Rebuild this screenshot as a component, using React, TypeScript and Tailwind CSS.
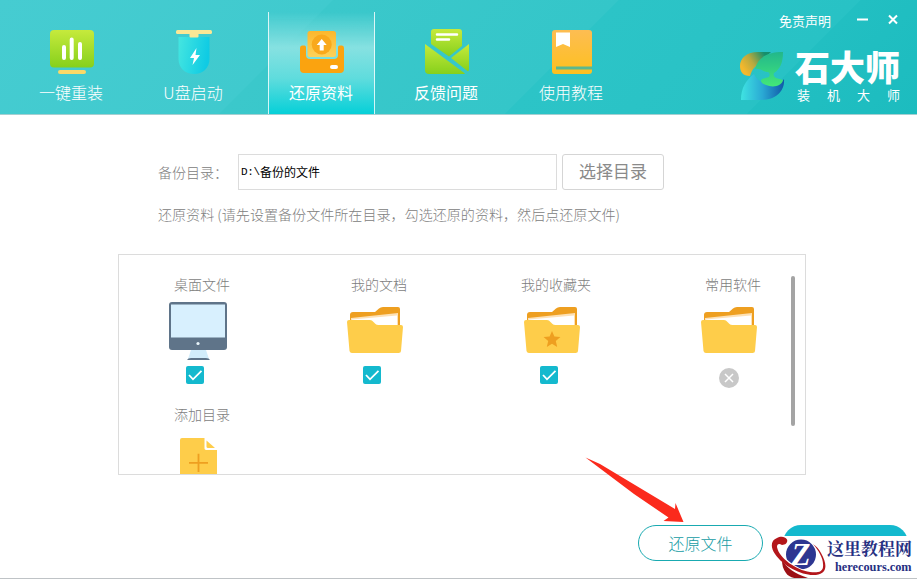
import type { ReactNode } from "react";

const FONT = "font-['Noto_Sans_CJK_SC',sans-serif]";

function ReinstallIcon() {
  return (
    <svg width="44" height="44" viewBox="0 0 44 44">
      <defs>
        <linearGradient id="green" x1="0" y1="0" x2="0" y2="1">
          <stop offset="0" stopColor="#c6ea3c" />
          <stop offset="1" stopColor="#86d01c" />
        </linearGradient>
      </defs>
      <rect width="44" height="37.5" rx="4" fill="url(#green)" />
      <path d="M14 17v11M21.7 9.500v18.500M30 14v14" stroke="#fff" strokeWidth="4" strokeLinecap="round" />
      <rect x="8" y="40" width="28" height="4" rx="2" fill="#fbd968" />
    </svg>
  );
}

function UsbIcon() {
  return (
    <svg width="36" height="44" viewBox="0 0 36 44">
      <defs>
        <linearGradient id="usb" x1="0" y1="0" x2="1" y2="0.2">
          <stop offset="0" stopColor="#45e6e0" />
          <stop offset="1" stopColor="#0fcbe4" />
        </linearGradient>
      </defs>
      <path d="M2.500 7h31v22c0 9-7 15-15.500 15S2.500 38 2.500 29z" fill="url(#usb)" />
      <rect width="36" height="4" rx="1.500" fill="#fbe795" />
      <rect x="13.500" y="3.500" width="9" height="4" rx="1" fill="#fbe795" />
      <path d="M20.500 18l-6.500 10h4l-1.500 7 7.500-10h-4.500z" fill="#fff" />
    </svg>
  );
}

function RestoreIcon() {
  return (
    <svg width="44" height="44" viewBox="0 0 44 44">
      <defs>
        <linearGradient id="sheet" x1="0" y1="0" x2="0" y2="1">
          <stop offset="0" stopColor="#fcb72c" />
          <stop offset="1" stopColor="#fcd25a" />
        </linearGradient>
      </defs>
      <path d="M0 18q0-2.500 2-2.500h2.500q1.500 0 1.500 2V25q0 4 4 4h24q4 0 4-4v-7.500q0-2 1.500-2H42q2 0 2 2.500v21q0 4-4 4H4q-4 0-4-4z" fill="#fba30f" />
      <rect x="7.500" y="1" width="28.500" height="26" rx="2.500" fill="url(#sheet)" />
      <circle cx="21.700" cy="14.500" r="10" fill="#f9a91c" />
      <path d="M21.700 9l5 6h-3v5.500h-4V15h-3z" fill="#fff" />
      <rect x="30" y="35" width="8" height="4" rx="2" fill="#fff" />
    </svg>
  );
}

function FeedbackIcon() {
  return (
    <svg width="44" height="45" viewBox="0 0 44 45" className="-mt-px">
      <path d="M6 15V3q0-3 3-3h25q3 0 3 3v14L24 27.500z" fill="url(#green)" />
      <path d="M12 5.500h20M12 10.500h12" stroke="#fff" strokeWidth="2.500" strokeLinecap="round" />
      <path d="M0 15L40 44.500q-1 .5-2 .5H4q-4 0-4-4z" fill="url(#green)" />
      <path d="M44 15V40q0 1.500-1 2.500L26 29z" fill="url(#green)" />
    </svg>
  );
}

function TutorialIcon() {
  return (
    <svg width="40" height="44" viewBox="0 0 40 44">
      <defs>
        <linearGradient id="book" x1="0" y1="0" x2="0" y2="1">
          <stop offset="0" stopColor="#fdbd52" />
          <stop offset="1" stopColor="#fdc01f" />
        </linearGradient>
      </defs>
      <rect width="40" height="44" rx="3" fill="url(#book)" />
      <path d="M4 38h36" stroke="#5ab890" strokeWidth="3" />
      <path d="M4 2.500h14V17l-7-3L4 17z" fill="#fff" />
    </svg>
  );
}

function Logo() {
  return (
    <svg width="45" height="48" viewBox="0 0 45 48">
      <defs>
        <linearGradient id="lg1" x1="0" y1="0.500" x2="1" y2="0">
          <stop offset="0" stopColor="#f5b82c" />
          <stop offset="0.350" stopColor="#b8a93f" />
          <stop offset="0.800" stopColor="#158f6c" />
        </linearGradient>
        <linearGradient id="lg2" x1="0" y1="0" x2="0" y2="1">
          <stop offset="0" stopColor="#22b78b" />
          <stop offset="1" stopColor="#43e878" />
        </linearGradient>
        <linearGradient id="lg3" x1="0" y1="0" x2="1" y2="0">
          <stop offset="0" stopColor="#3fe3e2" />
          <stop offset="0.500" stopColor="#2aa9d4" />
          <stop offset="1" stopColor="#1059a8" />
        </linearGradient>
      </defs>
      <path d="M10 24C3 24 0 20 0 14 0 6 7 0 18 0h13L14 16c-2 2-3 5-4 8z" fill="url(#lg1)" />
      <path d="M1 48C1 36 6 28 14 22c2 5 6 8 12 9 8 2 15 1 18-4 1 13-9 21-23 21z" fill="url(#lg3)" />
      <path d="M15 17C18 6 26 0 43 0c0 11-3 17-9 21-1 2 0 4 2 5l7 2c-1 6-10 8-17 5-5-2-6-4-4-6l7-2c1-2 1-4-1-5-4 0-8-4-13-3z" fill="url(#lg2)" />
    </svg>
  );
}

function Monitor() {
  return (
    <svg width="58" height="58" viewBox="0 0 58 58">
      <path d="M22 48h15l3 9H19z" fill="#d2edfb" />
      <rect width="58" height="48" rx="3" fill="#5f7489" />
      <path d="M2 2.500h54V35.500H2z" fill="#d8f0fe" />
      <circle cx="29" cy="41.500" r="1.600" fill="#e8f4fa" />
      <path d="M18 58q1-2 4-2h15q3 0 4 2z" fill="#5f7489" />
    </svg>
  );
}

function Folder({ star }: { star?: boolean }) {
  return (
    <svg width="56" height="47" viewBox="0 0 56 47" className="-mt-0.5">
      <path d="M3 21V8q0-3 3-3h22l4-3.500Q33.500 0 36 0h15q2 0 2 2v24H3z" fill="#ee9f20" />
      <path d="M4 11l47-5v14H4z" fill="#fde1b5" />
      <path d="M5 12.500l45-4V21H5z" fill="#fff" />
      <path d="M2 13h21q2 0 3.500 2l2 2q1 1 3 1H54q2 0 2 2l-2 24q0 2-2.500 2H5q-2 0-2.500-2L0 15q0-2 2-2z" fill="#fecd4a" />
      {star && (
        <path d="M28 24l2.400 5.600 6 .5-4.600 4 1.400 5.900-5.200-3.200-5.200 3.200 1.400-5.900-4.600-4 6-.5z" fill="#ee9f20" />
      )}
    </svg>
  );
}

function AddFile() {
  return (
    <svg width="37" height="46" viewBox="0 0 37 48" preserveAspectRatio="none" className="shrink-0">
      <path d="M2 0h22.500v11q0 1.500 1.500 1.500h11V48H0V2q0-2 2-2z" fill="#fecd4a" />
      <path d="M26.500 2.500l8.500 8h-7q-1.500 0-1.500-1.500z" fill="#fecd4a" />
      <path d="M9 26h19M18.500 16.500v19" stroke="#ee9f20" strokeWidth="1.800" />
    </svg>
  );
}

function Check() {
  return (
    <svg width="18" height="18" viewBox="0 0 18 18" className="-ml-3.5 mt-1.5">
      <rect width="18" height="18" rx="2" fill="#14b9ce" />
      <path d="M3 9l4 4.300 8.500-8.500" fill="none" stroke="#fff" strokeWidth="1.800" />
    </svg>
  );
}

function Disabled() {
  return (
    <svg width="20" height="20" viewBox="0 0 20 20" className="-ml-2 mt-2">
      <circle cx="10" cy="10" r="10" fill="#c8c8c8" />
      <path d="M6 6l8 8M14 6l-8 8" stroke="#fff" strokeWidth="1.500" />
    </svg>
  );
}

type TabProps = { label: string; icon: ReactNode; active?: boolean; className?: string };

function Tab({ label, icon, active, className = "" }: TabProps) {
  return (
    <button
      className={`flex w-[107px] flex-col items-center text-white ${
        active
          ? "mt-3 border-x border-white/80 bg-[linear-gradient(to_bottom,transparent,#86e1e1_35%,#5fdcdd_65%,#06d0d8)] pt-[18px]"
          : "pt-[30px]"
      } ${className}`}
    >
      <div className="flex h-11 justify-center">{icon}</div>
      <span className="mt-1.5 -ml-px text-base leading-6">{label}</span>
    </button>
  );
}

type ItemProps = { label: string; icon: ReactNode; children?: ReactNode };

function BackupItem({ label, icon, children }: ItemProps) {
  return (
    <div className="flex w-[66px] flex-col items-center">
      <span className="text-sm font-light leading-5 whitespace-nowrap text-[#7d7d7d]">{label}</span>
      <div className="-ml-2 mt-2 flex h-[58px] items-center">{icon}</div>
      {children}
    </div>
  );
}

function Watermark() {
  return (
    <div className="absolute top-[536px] left-[770px] flex h-[43px] w-[147px] bg-white">
      <svg width="57" height="43" viewBox="0 0 57 43" className="shrink-0">
        <path d="M12 24c4 7 13 14 26 18-9 2-19 0-22-5-3-4-4-8-4-13z" fill="#9c1015" />
        <circle cx="31" cy="18.500" r="15" fill="#2d3691" />
        <text x="31" y="29" textAnchor="middle" fontFamily="Liberation Serif" fontSize="31" fontWeight="bold" fontStyle="italic" fill="#fff">
          Z
        </text>
        <path d="M8 11c2 12 17 23 32 26 8 1 14-1 14-6" fill="none" stroke="#fff" strokeWidth="3" />
        <path d="M17 3.500C15 0 10 0 7 2 1 4 0 11 5 18c8 12 26 21 38 21 13 0 16-8 8-22-2-4-5-7-8-9 6 7 10 14 10 20 1 8-5 9-13 8C26 34 9 22 7 11c0-3 2-4 5-2 4 0 6-3 5-5.500z" fill="#b3161b" />
      </svg>
      <div className="flex flex-col whitespace-nowrap text-[#263082]">
        <span className="font-['Noto_Serif_CJK_SC','Noto_Sans_CJK_SC',serif] text-[17px] leading-[24px] font-bold">这里教程网</span>
        <span className="ml-2 font-['Liberation_Serif',serif] text-[12.3px] leading-[14px] font-bold">herecours.com</span>
      </div>
    </div>
  );
}

export default function App() {
  return (
    <div className={`relative flex h-[579px] w-[917px] flex-col overflow-hidden border-b border-[#bfc3c6] bg-white ${FONT}`}>
      <header className="flex h-[115px] shrink-0 justify-between border-b border-[#a5cfd1] bg-[linear-gradient(135deg,#46ccd1_0px,#40cace_235px,#3bc8cb_236px,#34c6c9_437px,#2cc4c7_438px,#28c2c5_608px,#22bfc2_609px,#1cbcbf_100%)]">
        <nav className="flex pl-[18px]">
          <Tab label="一键重装" icon={<ReinstallIcon />} className="font-light" />
          <Tab label="U盘启动" icon={<UsbIcon />} className="ml-[15px] font-light" />
          <Tab label="还原资料" icon={<RestoreIcon />} active className="ml-[21px]" />
          <Tab label="反馈问题" icon={<FeedbackIcon />} className="ml-[18px]" />
          <Tab label="使用教程" icon={<TutorialIcon />} className="ml-[18px] font-light" />
        </nav>

        <div className="flex flex-col items-end pr-4">
          <div className="mt-2.5 mr-px flex h-[22px] items-center text-white">
            <span className="text-[13px]">免责声明</span>
            <svg width="44" height="14" viewBox="0 0 44 14" className="ml-[25px]">
              <path d="M1 5.500h11M33 1.500l8 8M41 1.500l-8 8" stroke="#fff" strokeWidth="2" />
            </svg>
          </div>
          <div className="mt-3.5 flex text-white">
            <div className="mt-1.5">
              <Logo />
            </div>
            <div className="ml-2.5 w-[106px]">
              <div className="text-[35px] leading-[40px] font-black">石大师</div>
              <div className="mt-px flex justify-between pr-px pl-0.5 text-[13px] leading-4">
                <span>装</span>
                <span>机</span>
                <span>大</span>
                <span>师</span>
              </div>
            </div>
          </div>
        </div>
      </header>

      <main className="flex flex-col pt-[39px]">
        <div className="flex h-9 items-center pl-[158px]">
          <label className="w-20 text-sm font-light whitespace-nowrap text-[#808080]">备份目录：</label>
          <div className="flex h-9 w-[319px] items-center border border-[#dcdcdc] pl-0.5 text-xs text-black">
            <span className="font-['Liberation_Mono',monospace] text-[11px] tracking-[-0.3px]">D:\</span>
            <span>备份的文件</span>
          </div>
          <button className="ml-[5px] h-9 w-[102px] rounded-[3px] border border-[#d5d5d5] pb-0.5 text-[17px] text-[#8a8a8a]">
            选择目录
          </button>
        </div>
        <p className="mt-3.5 pl-[158px] text-[14.07px] leading-5 font-light whitespace-nowrap text-[#808080]">
          还原资料 (请先设置备份文件所在目录，勾选还原的资料，然后点还原文件)
        </p>

        <section className="mt-[30px] ml-[118px] flex h-[221px] w-[688px] justify-between overflow-hidden border border-[#dcdcdc] pt-[19px] pr-2.5 pl-[50px]">
          <div className="flex flex-col">
            <div className="flex h-[130px] shrink-0 gap-[111px]">
              <BackupItem label="桌面文件" icon={<Monitor />}>
                <Check />
              </BackupItem>
              <BackupItem label="我的文档" icon={<Folder />}>
                <Check />
              </BackupItem>
              <BackupItem label="我的收藏夹" icon={<Folder star />}>
                <Check />
              </BackupItem>
              <BackupItem label="常用软件" icon={<Folder />}>
                <Disabled />
              </BackupItem>
            </div>
            <BackupItem label="添加目录" icon={<AddFile />} />
          </div>
          <div className="mt-0.5 h-[150px] w-1 rounded-full bg-[#a4a4a4]" />
        </section>

        <div className="mt-[50px] flex gap-5 pl-[638px]">
          <button className="h-9 w-[125px] rounded-full border border-[#19aab1] pb-px text-base font-light text-[#149ca4]">还原文件</button>
          <div className="h-9 w-[125px] rounded-full bg-[#14b9ce]" />
        </div>
      </main>

      {/* arrow to the restore button */}
      <svg width="100" height="68" viewBox="0 0 100 68" className="absolute top-[456px] left-[584px]">
        <path d="M1.500 1.500L16 8l75 45 .5-6 8 19-20-1 5-3.500L50 38z" fill="#fb2a1c" />
      </svg>
      <Watermark />
    </div>
  );
}
